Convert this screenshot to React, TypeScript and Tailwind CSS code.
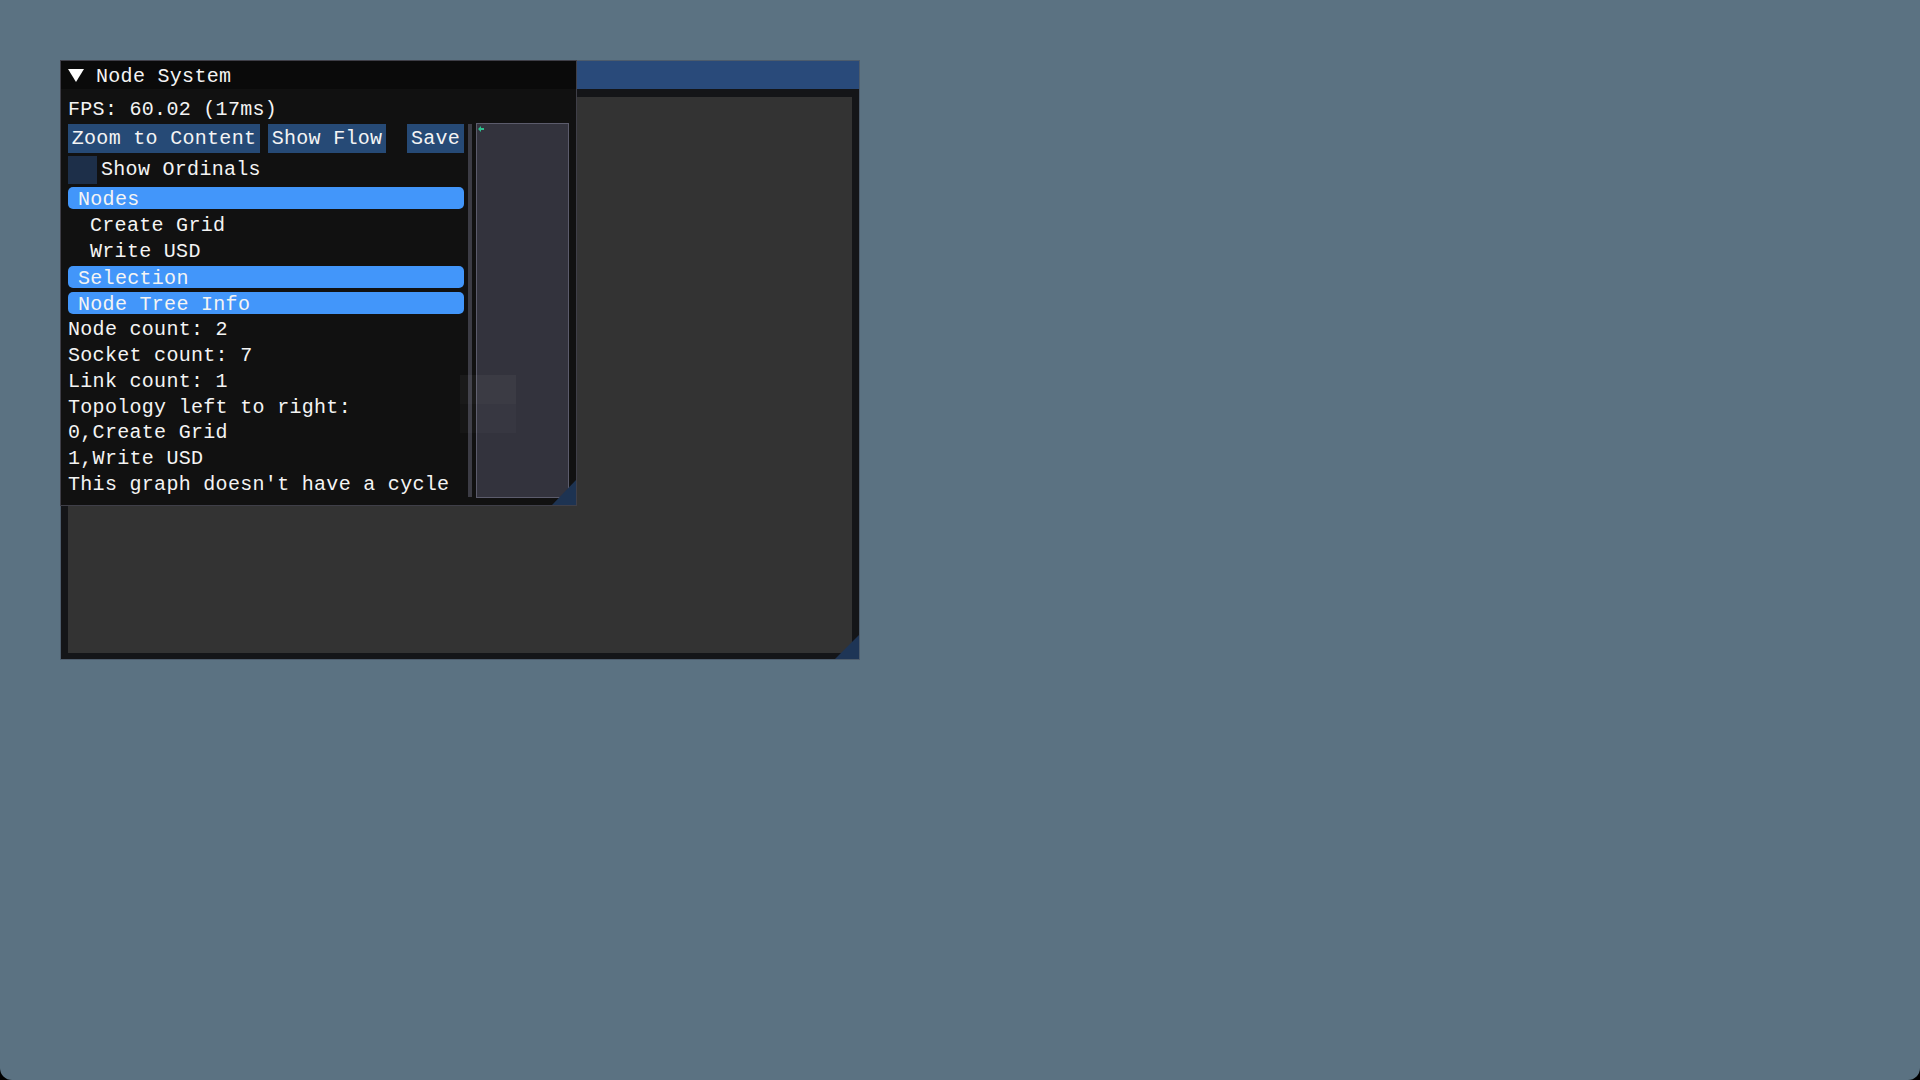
import React from "react";

const mono = "font-['Liberation_Mono','DejaVu_Sans_Mono',monospace] text-[20px] tracking-[0.3px] text-[#f4f4f4]";

function Header({ label }: { label: string }) {
  return (
    <div className="h-[22.5px] rounded-[5px] bg-[#4296fa] pl-[10px] leading-[25px] whitespace-pre overflow-hidden">
      {label}
    </div>
  );
}

function Line({ children, indent }: { children: React.ReactNode; indent?: boolean }) {
  return (
    <div className={"h-[22.4px] leading-[25px] whitespace-pre " + (indent ? "pl-[22px]" : "")}>
      {children}
    </div>
  );
}

export default function App() {
  return (
    <div className="w-[1920px] h-[1080px] bg-black">
      <div className="relative w-full h-full bg-[#5b7282] rounded-b-[12px] overflow-hidden">
        {/* Outer canvas window */}
        <div className="absolute left-[60px] top-[60px] w-[800px] h-[600px] flex flex-col border border-[#4d5c6c]">
          <div className="h-[28px] bg-[#294a7a]" />
          <div className="relative flex-1 bg-[#141518] pt-[8px] px-[7px] pb-[6px] flex">
            <div className="flex-1 bg-[#333333]" />
            <div className="absolute right-0 bottom-0 w-[24px] h-[24px] bg-[#1e3556] [clip-path:polygon(100%_0,100%_100%,0_100%)]" />
          </div>
        </div>

        {/* Node System window */}
        <div className={"absolute left-[60px] top-[60px] w-[517px] h-[446px] border border-[#3f3f48] bg-[#111111] flex flex-col " + mono}>
          <div className="h-[28px] bg-[#0a0a0a] flex items-center pl-[7px]">
            <svg width="16" height="13" viewBox="0 0 16 13" className="mt-[1px]">
              <polygon points="0,0 16,0 8,13" fill="#ffffff" />
            </svg>
            <span className="ml-[12px] h-[28px] leading-[31px]">Node System</span>
          </div>
          <div className="flex flex-col px-[7px] pt-[8px]">
            <Line>FPS: 60.02 (17ms)</Line>
            <div className="mt-[5px] flex">
              <div className="w-[396px] flex flex-col">
                <div className="h-[29px] flex leading-[30px]">
                  <div className="w-[192px] h-full bg-[#264a76] flex items-center justify-center whitespace-pre">Zoom to Content</div>
                  <div className="ml-[8px] w-[118px] h-full bg-[#264a76] flex items-center justify-center whitespace-pre">Show Flow</div>
                  <div className="ml-auto w-[57px] h-full bg-[#264a76] flex items-center justify-center whitespace-pre">Save</div>
                </div>
                <div className="mt-[3px] h-[28px] flex items-center">
                  <div className="w-[29px] h-[28px] bg-[#1d2f49]" />
                  <span className="ml-[4px] whitespace-pre leading-[32px]">Show Ordinals</span>
                </div>
                <div className="mt-[2.5px] flex flex-col gap-[3.8px]">
                  <Header label="Nodes" />
                  <Line indent>Create Grid</Line>
                  <Line indent>Write USD</Line>
                  <Header label="Selection" />
                  <Header label="Node Tree Info" />
                </div>
                <div className="mt-[2.5px] flex flex-col gap-[3.5px]">
                  <Line>Node count: 2</Line>
                  <Line>Socket count: 7</Line>
                  <Line>Link count: 1</Line>
                  <Line>Topology left to right:</Line>
                  <Line>0,Create Grid</Line>
                  <Line>1,Write USD</Line>
                  <Line>This graph doesn't have a cycle</Line>
                </div>
              </div>
              <div className="ml-[4px] w-[4px] h-[373px] bg-[#3c3c45]" />
              <div className="relative ml-[4px] -mt-[1px] w-[93px] h-[375px] border border-[#5c5c6c] bg-[#33333d]">
                <svg className="absolute left-[1px] top-[2px]" width="6" height="6" viewBox="0 0 6 6">
                  <path d="M0 3 L3 0 L3 2 L6 2 L6 4 L3 4 L3 6 Z" fill="#2fc08f" />
                </svg>
              </div>
            </div>
          </div>
          {/* faint ghost rectangle */}
          <div className="absolute left-[399px] top-[314px] w-[56px] flex flex-col">
            <div className="h-[29px] bg-white/[0.04]" />
            <div className="h-[29px] bg-white/[0.025]" />
          </div>
          <div className="absolute right-0 bottom-0 w-[24px] h-[25px] bg-[#1d3352] [clip-path:polygon(100%_0,100%_100%,0_100%)]" />
        </div>
      </div>
    </div>
  );
}
